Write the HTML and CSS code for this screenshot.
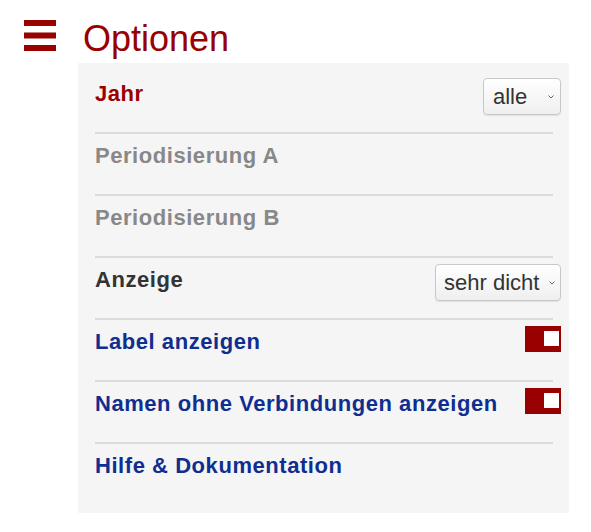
FILE: index.html
```html
<!DOCTYPE html>
<html lang="de">
<head>
<meta charset="utf-8">
<title>Optionen</title>
<link rel="stylesheet" href="styles.css">
</head>
<body>
<header class="header">
  <svg class="menu-icon" width="32" height="31" viewBox="0 0 32 31" aria-hidden="true">
    <rect x="0" y="0" width="32" height="6" fill="#990000"/>
    <rect x="0" y="12.5" width="32" height="6" fill="#990000"/>
    <rect x="0" y="25" width="32" height="6" fill="#990000"/>
  </svg>
  <h1 class="title">Optionen</h1>
</header>
<main class="panel">
  <div class="row">
    <span class="label c-red">Jahr</span>
    <div class="select select-year"><span>alle</span><svg class="chev" width="6" height="4" viewBox="0 0 6 4"><polyline points="0.5,0.5 3,3 5.5,0.5" fill="none" stroke="#666" stroke-width="1"/></svg></div>
  </div>
  <div class="row">
    <span class="label c-gray">Periodisierung A</span>
  </div>
  <div class="row">
    <span class="label c-gray">Periodisierung B</span>
  </div>
  <div class="row">
    <span class="label c-dark">Anzeige</span>
    <div class="select select-view"><span>sehr dicht</span><svg class="chev" width="6" height="4" viewBox="0 0 6 4"><polyline points="0.5,0.5 3,3 5.5,0.5" fill="none" stroke="#666" stroke-width="1"/></svg></div>
  </div>
  <div class="row">
    <span class="label c-blue">Label anzeigen</span>
    <span class="toggle"><span class="knob"></span></span>
  </div>
  <div class="row">
    <span class="label c-blue">Namen ohne Verbindungen anzeigen</span>
    <span class="toggle"><span class="knob"></span></span>
  </div>
  <div class="row row-last">
    <span class="label c-blue">Hilfe &amp; Dokumentation</span>
  </div>
</main>
</body>
</html>
```

FILE: styles.css
```css
html, body {
  margin: 0;
  padding: 0;
  background: #ffffff;
}

body {
  font-family: "Liberation Sans", Arial, sans-serif;
  width: 591px;
}

.header {
  display: flex;
  align-items: flex-start;
  box-sizing: border-box;
  height: 63px;
  padding: 19px 0 0 24px;
}

.menu-icon {
  display: block;
  margin-top: 1px;
  flex: none;
}

.title {
  margin: 0 0 0 27px;
  font-size: 36px;
  line-height: 40px;
  font-weight: normal;
  color: #990000;
}

.panel {
  display: block;
  margin-left: 78px;
  width: 491px;
  height: 450px;
  box-sizing: border-box;
  background: #f5f5f5;
  padding: 9px 16px 0 17px;
}

.row {
  display: flex;
  justify-content: space-between;
  align-items: flex-start;
  box-sizing: border-box;
  height: 62px;
  padding-top: 6px;
  border-bottom: 2px solid #dcdcdc;
}

.row-last {
  border-bottom: none;
}

.label {
  margin-top: 3px;
  font-size: 22px;
  line-height: 26px;
  font-weight: bold;
  letter-spacing: 0.55px;
  white-space: nowrap;
}

.c-red { color: #990000; }
.c-gray { color: #888888; }
.c-dark { color: #333333; }
.c-blue { color: #0f2e8f; }

.select {
  display: flex;
  align-items: center;
  justify-content: space-between;
  box-sizing: border-box;
  height: 37px;
  margin-right: -8px;
  padding: 0 6px 0 9px;
  border: 1px solid #c8c8c8;
  border-radius: 4px;
  background: linear-gradient(#ffffff, #efefef);
  box-shadow: 0 1px 1px rgba(0, 0, 0, 0.08);
  font-size: 22px;
  color: #333333;
}

.select-year { width: 78px; }
.select-view { width: 126px; padding-left: 8px; padding-right: 5px; }

.chev {
  display: block;
  flex: none;
}

.toggle {
  position: relative;
  display: block;
  flex: none;
  width: 36px;
  height: 26px;
  margin-right: -8px;
  background: #990000;
}

.knob {
  position: absolute;
  top: 5px;
  right: 2px;
  width: 15px;
  height: 15px;
  background: #ffffff;
}
```
